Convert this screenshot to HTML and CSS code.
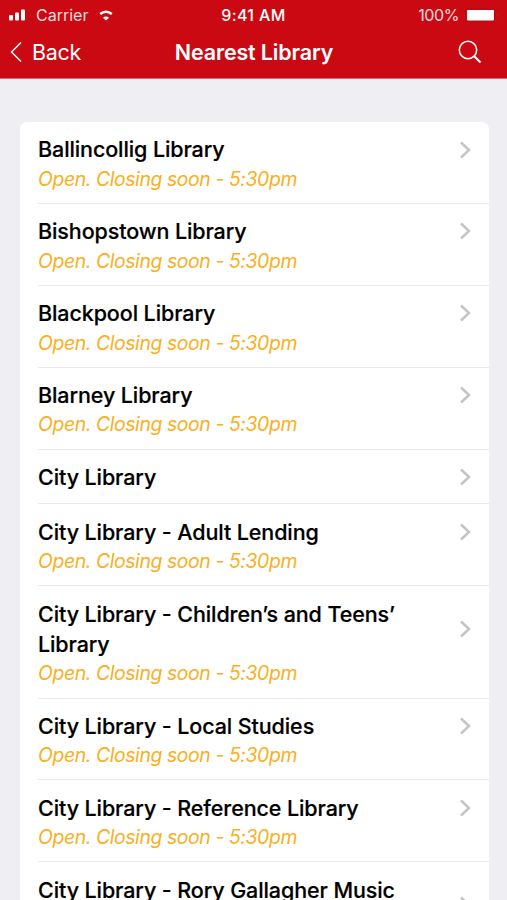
FILE: index.html
```html
<!DOCTYPE html>
<html lang="en">
<head>
  <meta charset="UTF-8" />
  <meta name="viewport" content="width=device-width, initial-scale=1.0"/>
  <title>Nearest Library</title>
  <link rel="stylesheet" href="styles.css">
</head>
<body>

  <header>
    <div class="status-bar">
      <div class="carrier">
        <svg class="signal" width="18" height="12" viewBox="0 0 18 12" fill="#fff">
          <rect x="0" y="6" width="4" height="5.500" rx="1"/>
          <rect x="6" y="3.500" width="4" height="8" rx="1"/>
          <rect x="12" y="0.500" width="4" height="11" rx="1"/>
        </svg>
        <span class="carrier-name">Carrier</span>
        <svg class="wifi" width="14" height="12" viewBox="0 0 14 12" fill="none" stroke="#fff">
          <path d="M1.200 5C4.500 2 9.500 2 12.800 5" stroke-width="2.400"/>
          <path d="M7 11.500L4 8.700C5.800 7.200 8.200 7.200 10 8.700Z" fill="#fff" stroke="none"/>
        </svg>
      </div>
      <div class="clock">9:41 AM</div>
      <div class="battery">
        <span>100%</span>
        <svg width="35" height="14" viewBox="0 0 35 14">
          <rect x="0.500" y="0.500" width="29.500" height="13" rx="2" fill="none" stroke="#b50d14"/>
          <rect x="2" y="2" width="27" height="10.500" rx="1" fill="#fff"/>
          <path d="M32 5v4.500c2-.8 2-3.700 0-4.500z" fill="#a5272b"/>
        </svg>
      </div>
    </div>
    <nav>
      <a class="back" href="#">
        <svg width="12" height="22" viewBox="0 0 12 22" fill="none" stroke="#fff" stroke-width="1.500">
          <path d="M11 1.500L1.500 11l9.500 9.500"/>
        </svg>
        <span>Back</span>
      </a>
      <h1>Nearest Library</h1>
      <a class="search" href="#">
        <svg width="24" height="24" viewBox="0 0 24 24" fill="none" stroke="#fff" stroke-width="1.500">
          <circle cx="10" cy="10" r="8.700"/>
          <path d="M16.200 16.200l6.300 6.300" stroke-width="2"/>
        </svg>
      </a>
    </nav>
  </header>

  <ul class="libraries" id="libraries"></ul>

  <script>
    const libraries = [
      { name: 'Ballincollig Library', status: 'Open. Closing soon - 5:30pm' },
      { name: 'Bishopstown Library', status: 'Open. Closing soon - 5:30pm' },
      { name: 'Blackpool Library', status: 'Open. Closing soon - 5:30pm' },
      { name: 'Blarney Library', status: 'Open. Closing soon - 5:30pm' },
      { name: 'City Library' },
      { name: 'City Library - Adult Lending', status: 'Open. Closing soon - 5:30pm' },
      { name: 'City Library - Children’s and Teens’ Library', status: 'Open. Closing soon - 5:30pm' },
      { name: 'City Library - Local Studies', status: 'Open. Closing soon - 5:30pm' },
      { name: 'City Library - Reference Library', status: 'Open. Closing soon - 5:30pm' },
      { name: 'City Library - Rory Gallagher Music Library', status: 'Open. Closing soon - 5:30pm' }
    ];

    document.getElementById('libraries').innerHTML = libraries.map(library => `
      <li>
        <div class="row">
          <h2>${library.name}</h2>
          <svg class="chevron" width="12" height="18" viewBox="0 0 12 18" fill="none" stroke="#c4c4c7" stroke-width="2.500">
            <path d="M2 1.500L10 9l-8 7.500"/>
          </svg>
        </div>
        ${library.status ? `<p>${library.status}</p>` : ''}
      </li>`).join('');
  </script>

</body>
</html>
```

FILE: styles.css
```css
* {
  box-sizing: border-box;
}
body {
  font-family: Inter, 'Liberation Sans', sans-serif;
  background: #efeef3;
  margin: 0;
  height: 900px;
  overflow: hidden;
}
header {
  height: 79px;
  background: #cb0912;
  border-bottom: 1px solid #dc6a72;
  color: #fff;
}
.status-bar {
  display: grid;
  grid-template-columns: 1fr auto 1fr;
  align-items: center;
  height: 30px;
  font-size: 16px;
}
.carrier {
  display: flex;
  align-items: center;
  padding-left: 9px;
  color: #ffd9db;
}
.carrier-name {
  margin-left: 9px;
}
.wifi {
  margin-left: 11px;
}
.clock {
  font-weight: 500;
  letter-spacing: 0.4px;
}
.battery {
  display: flex;
  align-items: center;
  justify-content: flex-end;
  gap: 6px;
  padding-right: 7px;
  color: #ffd9db;
  letter-spacing: -0.4px;
}
nav {
  display: grid;
  grid-template-columns: 1fr auto 1fr;
  align-items: center;
  height: 44px;
}
nav a {
  color: #fff;
  text-decoration: none;
}
.back {
  display: flex;
  align-items: center;
  gap: 10px;
  padding-left: 10px;
  font-size: 21.5px;
  letter-spacing: -0.3px;
}
h1 {
  margin: 0;
  padding-left: 1px;
  font-size: 21.5px;
  font-weight: 600;
  letter-spacing: -0.15px;
}
.search {
  display: flex;
  justify-content: flex-end;
  padding-right: 25px;
}
.libraries {
  margin: 43px 18px 0 20px;
  padding: 0;
  list-style: none;
  background: #fff;
  border-radius: 7px;
}
.libraries li {
  margin-left: 18px;
  padding: 12.4px 18px 11px 0;
  border-bottom: 1px solid #ebebed;
}
.row {
  display: flex;
  align-items: center;
  justify-content: space-between;
}
h2 {
  margin: 0;
  max-width: 380px;
  font-size: 21.5px;
  font-weight: 500;
  line-height: 30.4px;
  letter-spacing: -0.1px;
  color: #000;
  -webkit-text-stroke: 0.2px #000;
}
.chevron {
  flex-shrink: 0;
}
.libraries p {
  margin: 0;
  padding-top: 1px;
  font-size: 19.4px;
  font-style: italic;
  line-height: 26.1px;
  letter-spacing: -0.4px;
  color: #f9af22;
}
```
